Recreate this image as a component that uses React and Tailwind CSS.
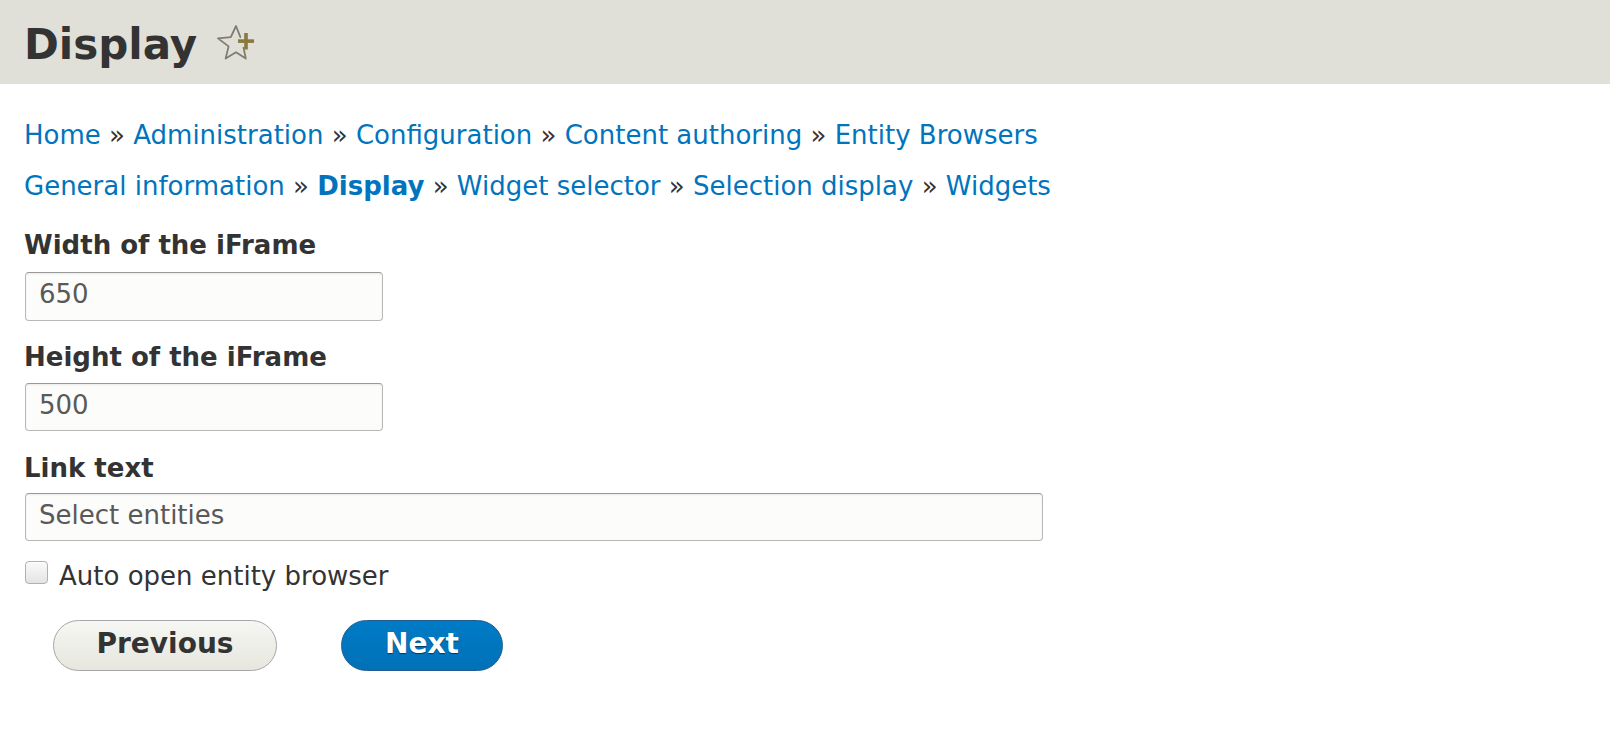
import React from 'react'

const crumbs = ['Home', 'Administration', 'Configuration', 'Content authoring', 'Entity Browsers']
const steps = [
  { label: 'General information' },
  { label: 'Display', active: true },
  { label: 'Widget selector' },
  { label: 'Selection display' },
  { label: 'Widgets' },
]

function Trail({ items }) {
  return (
    <div className="leading-[51px] text-[26px] text-[#333]">
      {items.map((it, i) => (
        <React.Fragment key={it.label}>
          {i > 0 && <span> » </span>}
          <a href="#" className={`text-[#0074bd] ${it.active ? 'font-bold' : ''}`}>{it.label}</a>
        </React.Fragment>
      ))}
    </div>
  )
}

function StarIcon() {
  return (
    <svg className="w-[40px] h-[40px] ml-[18px] mt-[4px]" viewBox="0 0 40 40">
      <path
        d="M21 3 L25.4 14.2 L37.3 15.4 L28.3 23.4 L30.8 35.6 L21 29.2 L10.6 35.6 L13.6 23.4 L3 15.4 L15.8 14.2 Z"
        fill="none"
        stroke="#7f7d6e"
        strokeWidth="1.8"
        strokeLinejoin="round"
      />
      <rect x="26" y="13" width="14" height="11" fill="#e0e0d8" />
      <rect x="23" y="16.3" width="16" height="3.6" fill="#887a3c" />
      <rect x="29.2" y="10" width="3.6" height="16.5" fill="#887a3c" />
    </svg>
  )
}

function TextField({ label, value, wrap, field }) {
  return (
    <div className={wrap}>
      <label className="block leading-[30px] text-[26px] font-bold text-[#333]">{label}</label>
      <input
        type="text"
        defaultValue={value}
        className={`${field} ml-px pl-[13px] pb-[5px] bg-[#fcfcfa] border border-[#b8b8b8] border-t-[#999] rounded-[4px] text-[26px] text-[#595959] shadow-[inset_0_1px_2px_rgba(0,0,0,0.08)] outline-none`}
        style={{ fontFamily: '"DejaVu Sans", sans-serif' }}
      />
    </div>
  )
}

export default function App() {
  return (
    <div className="min-h-screen bg-white" style={{ fontFamily: '"DejaVu Sans", "Liberation Sans", sans-serif' }}>
      <div className="h-[84px] bg-[#e0e0d8] pl-[24px] pt-[19px] flex items-start">
        <h1 className="text-[42px] leading-[52px] font-bold text-[#333]">Display</h1>
        <StarIcon />
      </div>

      <div className="px-[24px] pt-[26px]">
        <Trail items={crumbs.map(c => ({ label: c }))} />
        <Trail items={steps} />

        <TextField label="Width of the iFrame" value="650" wrap="mt-[18px]" field="w-[358px] h-[49px] mt-[12px]" />
        <TextField label="Height of the iFrame" value="500" wrap="mt-[21px]" field="w-[358px] h-[48px] mt-[11px]" />
        <TextField label="Link text" value="Select entities" wrap="mt-[22px]" field="w-[1018px] h-[48px] mt-[10px]" />

        <label className="flex items-start mt-[20px] leading-[30px] text-[26px] text-[#333]">
          <span className="ml-px w-[23px] h-[23px] rounded-[4px] border border-[#b0b0b0] bg-gradient-to-b from-[#fafafa] to-[#e4e4e4] shadow-[inset_0_1px_1px_rgba(255,255,255,0.8)]" />
          <span className="ml-[11px]">Auto open entity browser</span>
        </label>

        <div className="flex mt-[29px] ml-[29px] gap-[64px]">
          <button className="h-[51px] w-[224px] pb-[3px] rounded-full border border-[#a6a6a6] bg-gradient-to-b from-[#f6f6f3] to-[#e7e7df] text-[28px] font-bold text-[#333]">
            Previous
          </button>
          <button className="h-[51px] w-[162px] pb-[3px] rounded-full border border-[#1e5c90] bg-gradient-to-b from-[#007bc6] to-[#0071b8] text-[28px] font-bold text-white [text-shadow:0_1px_1px_rgba(0,0,0,0.5)]">
            Next
          </button>
        </div>
      </div>
    </div>
  )
}
